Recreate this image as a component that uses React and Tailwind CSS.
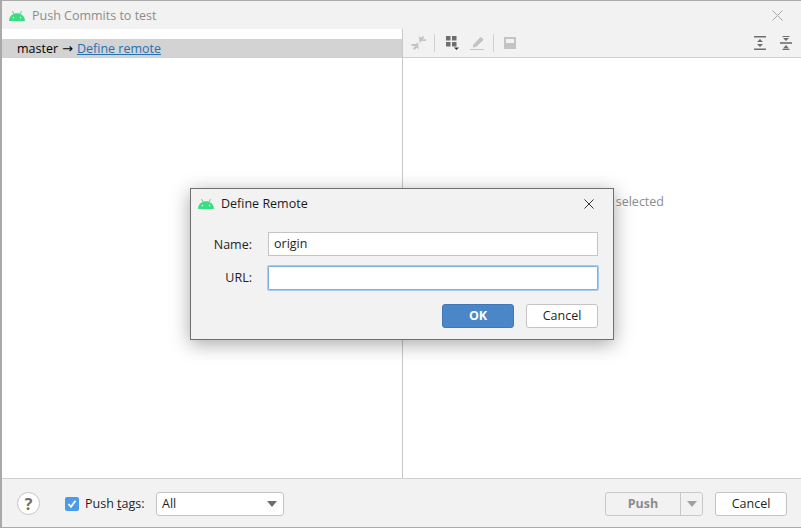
// Push Commits dialog
const font = 'font-["Open_Sans","Noto_Sans",sans-serif]';

const AndroidLogo = ({ className }) => (
    <svg className={className} viewBox="0 0 16 10" fill="#3ddc84">
        <path d="M0 10 C0 6.5 2 4 4.6 3 L3 0.6 L3.8 0.1 L5.5 2.7 C7.1 2.2 8.9 2.2 10.5 2.7 L12.2 0.1 L13 0.6 L11.4 3 C14 4 16 6.5 16 10 Z" />
        <circle cx="4.4" cy="6.6" r="0.8" fill="#f2f2f2" />
        <circle cx="11.6" cy="6.6" r="0.8" fill="#f2f2f2" />
    </svg>
);

const CloseIcon = ({ color, size }) => (
    <svg width={size} height={size} viewBox="0 0 11 11" stroke={color} strokeWidth="1" fill="none">
        <path d="M0.5 0.5 L10.5 10.5 M10.5 0.5 L0.5 10.5" />
    </svg>
);

const ToolbarIcons = () => (
    <div className="flex items-center h-full">
        {/* collapse arrows */}
        <svg className="ml-[8px]" width="16" height="16" viewBox="0 0 16 16" fill="#c4c4c4">
            <path d="M0.5 9 H5 L7 7.2 L7.8 14.5 L5.8 12.6 L3.5 15 L2 13.4 L4.2 11 H0.5 Z" />
            <path d="M15 6 H10.5 L8.6 8 L7.8 1 L9.8 2.8 L12 1 L13.4 2.4 L11.4 4.2 H15 Z" />
        </svg>
        <div className="w-px h-[18px] bg-[#d0d0d0] ml-[7px]" />
        {/* group by */}
        <svg className="ml-[11px]" width="15" height="16" viewBox="0 0 15 16" fill="#6e6e6e">
            <path d="M0 1 H4.5 V5.5 H0 Z M6 1 H10.5 V5.5 H6 Z M0 7 H4.5 V11.5 H0 Z M6 7 H10.5 V11.5 H6 Z" />
            <path d="M8 12.5 H13 L10.5 15 Z" fill="#333" />
        </svg>
        {/* edit */}
        <svg className="ml-[8px]" width="16" height="16" viewBox="0 0 16 16" fill="#c4c4c4">
            <path d="M4 10 L11 2.5 Q12 1.8 13 2.8 L14 3.8 Q14.6 4.6 14 5.4 L7 12 L4 12.4 Z" />
            <path d="M1 14 H15 V15 H1 Z" />
        </svg>
        <div className="w-px h-[18px] bg-[#d0d0d0] ml-[8px]" />
        {/* preview */}
        <svg className="ml-[9px]" width="14" height="14" viewBox="0 0 14 14">
            <rect x="1" y="1" width="12" height="12" fill="#c4c4c4" />
            <rect x="3" y="3" width="8" height="4" fill="#f2f2f2" />
        </svg>
        <div className="flex-1" />
        {/* expand all */}
        <svg width="14" height="16" viewBox="0 0 14 16" fill="#6e6e6e">
            <path d="M1 1 H13 V2.6 H1 Z M1 13.4 H13 V15 H1 Z" />
            <path d="M7 4 L10 7 H4 Z M7 12 L4 9 H10 Z" />
        </svg>
        {/* collapse all */}
        <svg className="ml-[12px] mr-[8px]" width="14" height="16" viewBox="0 0 14 16" fill="#6e6e6e">
            <path d="M1 7.2 H13 V8.8 H1 Z" />
            <path d="M7 6 L4 3 H10 Z M7 10 L10 13.4 H4 Z" />
            <path d="M3.5 1 H10.5 V2 H3.5 Z M3.5 14 H10.5 V15 H3.5 Z" />
        </svg>
    </div>
);

const DefineRemoteDialog = () => (
    <div className="absolute left-[190px] top-[188px] w-[424px] h-[152px] bg-[#f2f2f2] border border-[#6f6f6f] shadow-[0_4px_18px_rgba(0,0,0,0.35)] flex flex-col">
        <div className="flex items-center h-[29px] pl-[7px] pr-[19px] shrink-0">
            <AndroidLogo className="w-[16px] h-[10px]" />
            <span className="ml-[7px] pt-[2px] text-[12.5px] text-[#1a1a1a]">Define Remote</span>
            <div className="flex-1" />
            <CloseIcon color="#222" size={10} />
        </div>
        <div className="grid grid-cols-[60px_330px] gap-x-[16px] gap-y-[10px] items-center mt-[14px] ml-[1px]">
            <span className="text-right pt-[2px] text-[12.5px] text-[#1f1f1f]">Name:</span>
            <div className="h-[24px] bg-white border border-[#c4c4c4] flex items-center pl-[5px] pt-[1px] text-[12.5px] text-[#1f1f1f]">origin</div>
            <span className="text-right text-[12.5px] text-[#1f1f1f]">URL:</span>
            <div className="h-[24px] bg-white border border-[#7eaee0] ring-1 ring-[#a9cdf2] rounded-[1px]" />
        </div>
        <div className="flex justify-end gap-[12px] mt-[14px] pr-[15px]">
            <button className="w-[72px] h-[24px] pt-[1px] rounded-[3px] bg-[#4b87c8] border border-[#3f78b6] text-white text-[12.5px] font-bold">OK</button>
            <button className="w-[72px] h-[24px] pt-[1px] rounded-[3px] bg-white border border-[#c4c4c4] text-[#1f1f1f] text-[12.5px]">Cancel</button>
        </div>
    </div>
);

const App = () => {
    return (
        <div className={`relative w-[801px] h-[529px] overflow-hidden bg-white ${font} text-[12.5px]`}>
            <div className="flex flex-col h-[528px] border-t border-t-[#a9a9a9] border-l-2 border-l-[#a9a9a9] border-b border-b-[#a9a9a9] bg-white">
                {/* Title bar */}
                <div className="flex items-center h-[28px] bg-[#f2f2f2] pl-[7px] pr-[18px] shrink-0 pt-[1px]">
                    <AndroidLogo className="w-[16px] h-[10px]" />
                    <span className="ml-[7px] pt-[2px] text-[#8c8c8c] text-[12.5px]">Push Commits to test</span>
                    <div className="flex-1" />
                    <CloseIcon color="#a8a8a8" size={11} />
                </div>

                {/* Main split */}
                <div className="flex flex-1 min-h-0">
                    <div className="w-[401px] shrink-0 border-r border-[#c8c8c8] flex flex-col">
                        <div className="h-[10px]" />
                        <div className="h-[19px] bg-[#d3d3d3] flex items-center pl-[15px] pt-[1px] text-black whitespace-pre">
                            <span>master<span className='mx-[4px] font-["DejaVu_Sans",sans-serif] text-[13px]'>→</span><span className="text-[#2470b3] underline">Define remote</span></span>
                        </div>
                    </div>
                    <div className="flex-1 flex flex-col">
                        <div className="h-[29px] bg-[#f2f2f2] border-b border-[#d0d0d0] shrink-0">
                            <ToolbarIcons />
                        </div>
                        <div className="flex-1 flex justify-end">
                            <span className="mt-[135px] mr-[137px] text-[#8c8c8c]">selected</span>
                        </div>
                    </div>
                </div>

                {/* Bottom bar */}
                <div className="h-[49px] bg-[#f2f2f2] border-t border-[#cfcfcf] flex items-center shrink-0 pl-[15px] pr-[14px] pt-[1px]">
                    <div className="w-[23px] h-[23px] rounded-full bg-white border border-[#c4c4c4] flex items-center justify-center font-bold text-[16px] text-[#6e6e6e]">?</div>
                    <div className="ml-[25px] w-[14px] h-[14px] rounded-[2px] bg-[#4c9be8] flex items-center justify-center">
                        <svg width="10" height="10" viewBox="0 0 10 10" fill="none" stroke="white" strokeWidth="1.8">
                            <path d="M1.5 5 L4 7.8 L8.5 1.8" />
                        </svg>
                    </div>
                    <span className="ml-[6px] pt-[2px] w-[59px] whitespace-nowrap text-[#1f1f1f]">Push <span className="underline">t</span>ags:</span>
                    <div className="ml-[12px] w-[128px] h-[24px] pt-[1px] bg-white border border-[#c4c4c4] rounded-[3px] flex items-center justify-between pl-[5px] pr-[6px] text-[#1f1f1f]">
                        All
                        <svg width="10" height="6" viewBox="0 0 10 6" fill="#6e6e6e"><path d="M0 0 H10 L5 6 Z" /></svg>
                    </div>
                    <div className="flex-1" />
                    <div className="w-[98px] h-[24px] border border-[#c8c8c8] rounded-[3px] flex items-center">
                        <span className="w-[74px] pt-[2px] text-center font-bold text-[#8c8c8c]">Push</span>
                        <div className="w-px h-full bg-[#c8c8c8]" />
                        <div className="flex-1 flex justify-center">
                            <svg width="10" height="6" viewBox="0 0 10 6" fill="#a0a0a0"><path d="M0 0 H10 L5 6 Z" /></svg>
                        </div>
                    </div>
                    <button className="ml-[12px] w-[72px] h-[24px] pt-[1px] rounded-[3px] bg-white border border-[#c4c4c4] text-[#1f1f1f]">Cancel</button>
                </div>
            </div>

            <DefineRemoteDialog />
        </div>
    );
};

export default App;
